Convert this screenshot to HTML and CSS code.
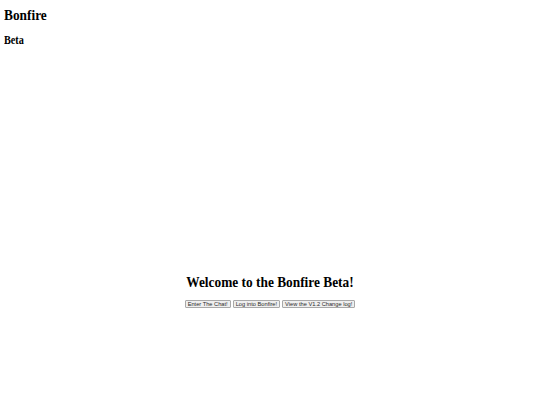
FILE: index.html
```html
<!DOCTYPE html>
<html>
<head>
<meta charset="utf-8">
<title>Bonfire</title>
<link rel="stylesheet" href="styles.css">
</head>
<body>
<header class="top">
<h1 class="brand">Bonfire</h1>
<h3 class="tag">Beta</h3>
</header>
<main class="hero">
<h1 class="welcome">Welcome to the Bonfire Beta!</h1>
<div class="actions">
<button class="btn">Enter The Chat!</button>
<button class="btn">Log into Bonfire!</button>
<button class="btn">View the V1.2 Change log!</button>
</div>
</main>
</body>
</html>
```
FILE: styles.css
```css
html, body {
  background: #ffffff;
}
body {
  margin: 0;
  padding: 0 4px;
  font-family: "Liberation Serif", "Times New Roman", serif;
  color: #000;
}
.top {
  padding-top: 7.4px;
}
.brand {
  font-size: 15px;
  line-height: 17px;
  margin: 0;
  font-weight: bold;
  transform: scaleX(0.89);
  transform-origin: left center;
}
.tag {
  font-size: 11.5px;
  line-height: 13px;
  margin: 9.2px 0 0;
  font-weight: bold;
  transform: scaleX(0.89);
  transform-origin: left center;
}
.hero {
  margin-top: 227.3px;
  text-align: center;
}
.welcome {
  font-size: 15px;
  line-height: 17px;
  margin: 0 0 9.1px;
  font-weight: bold;
  transform: scaleX(0.89);
  transform-origin: center center;
}
.actions {
  display: flex;
  justify-content: center;
  gap: 2px;
}
.btn {
  font-family: "Liberation Sans", Arial, sans-serif;
  font-size: 5.7px;
  padding: 0 2px;
  height: 8px;
  line-height: 6px;
  border: 1px solid #a8a8a8;
  border-radius: 1px;
  background: #efefef;
  color: #2a2a2a;
  margin: 0;
}
```
